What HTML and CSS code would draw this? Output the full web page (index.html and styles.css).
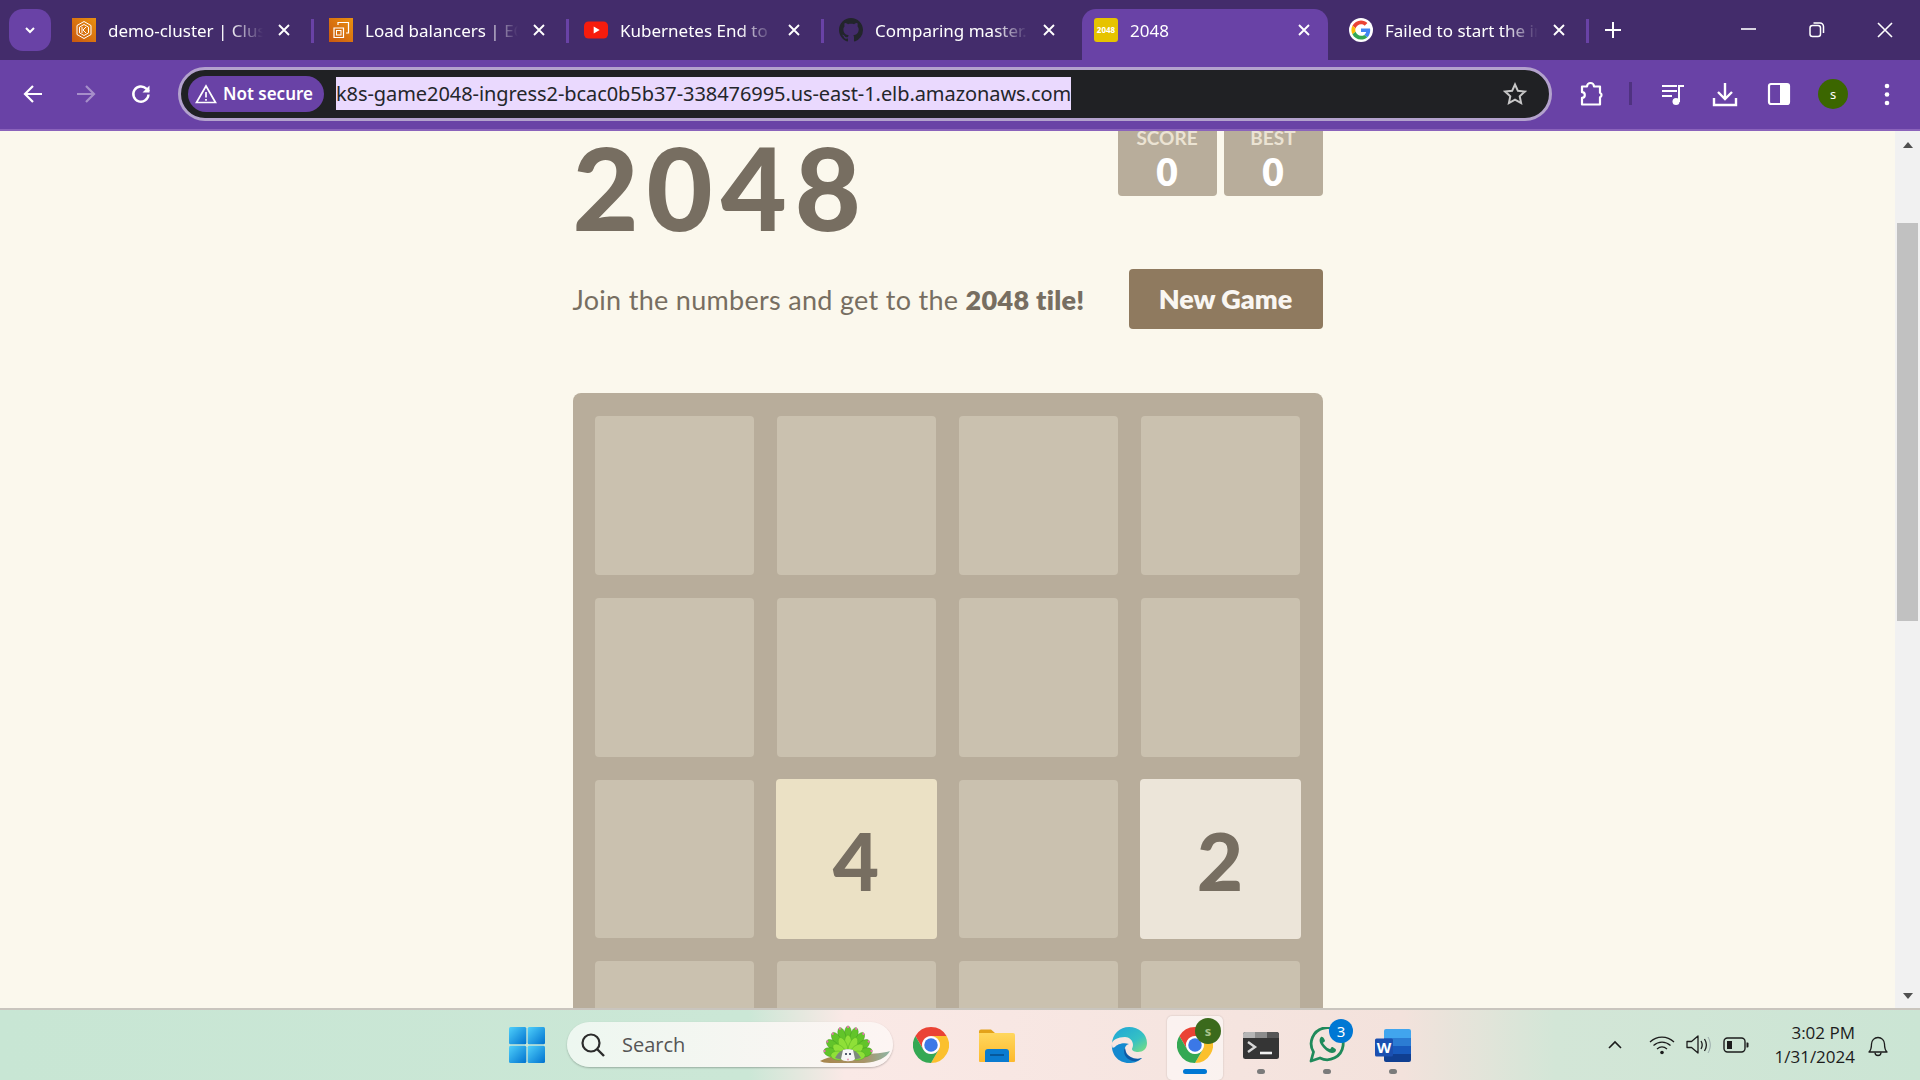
FILE: index.html
```html
<!DOCTYPE html>
<html lang="en">
  <head>
    <meta charset="utf-8">
    <title>2048</title>
    <link rel="stylesheet" href="styles.css">
  </head>
  <body>
    <svg class="defs" width="0" height="0">
      <symbol id="chrome" viewBox="0 0 48 48">
        <path fill="#ea4335" d="M24 0a24 24 0 0 1 20.8 12H24a12 12 0 0 0-10.4 18L3.2 12A24 24 0 0 1 24 0z"/>
        <path fill="#fbc02d" d="M44.8 12A24 24 0 0 1 24 48l10.4-18A12 12 0 0 0 24 12z"/>
        <path fill="#34a853" d="M3.2 12l10.4 18a12 12 0 0 0 20.8 0L24 48A24 24 0 0 1 3.2 12z"/>
        <circle cx="24" cy="24" r="11.5" fill="#fff"/>
        <circle cx="24" cy="24" r="9" fill="#3b78e7"/>
      </symbol>
      <symbol id="close" viewBox="0 0 14 14">
        <path d="M2 2l10 10M12 2L2 12" stroke="#fff" stroke-width="1.9" fill="none"/>
      </symbol>
      <linearGradient id="aws" x1="0" y1="1" x2="1" y2="0">
        <stop offset="0" stop-color="#c9580f"/>
        <stop offset="1" stop-color="#ea9010"/>
      </linearGradient>
      <linearGradient id="win" x1="0" y1="0" x2="1" y2="1">
        <stop offset="0" stop-color="#4fd0fb"/>
        <stop offset="1" stop-color="#0072cf"/>
      </linearGradient>
      <linearGradient id="edge" x1="0" y1="0" x2="1" y2="1">
        <stop offset="0" stop-color="#1fa4d8"/>
        <stop offset=".6" stop-color="#35c1c4"/>
        <stop offset="1" stop-color="#7fe07a"/>
      </linearGradient>
      <linearGradient id="folder" x1="0" y1="0" x2="0" y2="1">
        <stop offset="0" stop-color="#ffd75e"/>
        <stop offset="1" stop-color="#fdb92c"/>
      </linearGradient>
      <linearGradient id="ground" x1="0" y1="0" x2="1" y2="0">
        <stop offset="0" stop-color="#a8854c"/>
        <stop offset=".65" stop-color="#a8956a"/>
        <stop offset="1" stop-color="#8fb5a5"/>
      </linearGradient>
    </svg>

    <header class="tabstrip">
      <div class="tab-search">
        <svg width="14" height="14" viewBox="0 0 14 14"><path d="M3 5l4 4 4-4" stroke="#fff" stroke-width="2" fill="none"/></svg>
      </div>

      <div class="tab tab-first">
        <svg class="favicon" viewBox="0 0 24 24">
          <rect width="24" height="24" fill="url(#aws)"/>
          <path d="M12 3.5l7 4v9l-7 4-7-4v-9z M12 6.5l4.5 2.6v5.8L12 17.5l-4.5-2.6V9.1z" fill="none" stroke="#fff" stroke-width="1"/>
          <path d="M10 9v6M14 9l-3 3 3 3" fill="none" stroke="#fff" stroke-width="1"/>
        </svg>
        <span class="tab-title">demo-cluster | Cluster</span>
        <svg class="tab-close"><use href="#close"/></svg>
      </div>
      <div class="tab">
        <svg class="favicon" viewBox="0 0 24 24">
          <rect width="24" height="24" fill="url(#aws)"/>
          <path d="M9 7V4.500h10.500V15H17M5 10h9.500v9.500H5z" fill="none" stroke="#fff" stroke-width="1.200"/>
          <rect x="7.500" y="12.500" width="4.500" height="4.500" fill="none" stroke="#fff"/>
        </svg>
        <span class="tab-title">Load balancers | EC2</span>
        <svg class="tab-close"><use href="#close"/></svg>
      </div>
      <div class="tab">
        <svg class="favicon" viewBox="0 0 24 24">
          <rect x="0" y="3.500" width="24" height="17" rx="4.500" fill="#f61c0d"/>
          <path d="M9.700 8.500l6 3.500-6 3.500z" fill="#fff"/>
        </svg>
        <span class="tab-title">Kubernetes End to End</span>
        <svg class="tab-close"><use href="#close"/></svg>
      </div>
      <div class="tab tab-before-active">
        <svg class="favicon" viewBox="0 0 16 16">
          <path fill="#22252b" d="M8 0C3.58 0 0 3.58 0 8c0 3.54 2.29 6.53 5.47 7.59.4.07.55-.17.55-.38 0-.19-.01-.82-.01-1.49-2.01.37-2.53-.49-2.69-.94-.09-.23-.48-.94-.82-1.13-.28-.15-.68-.52-.01-.53.63-.01 1.08.58 1.23.82.72 1.21 1.87.87 2.33.66.07-.52.28-.87.51-1.07-1.78-.2-3.64-.89-3.64-3.95 0-.87.31-1.59.82-2.15-.08-.2-.36-1.02.08-2.12 0 0 .67-.21 2.2.82.64-.18 1.32-.27 2-.27.68 0 1.36.09 2 .27 1.53-1.04 2.2-.82 2.2-.82.44 1.1.16 1.92.08 2.12.51.56.82 1.27.82 2.15 0 3.07-1.87 3.75-3.65 3.95.29.25.54.73.54 1.48 0 1.07-.01 1.93-.01 2.2 0 .21.15.46.55.38A8.013 8.013 0 0016 8c0-4.420-3.580-8-8-8z"/>
        </svg>
        <span class="tab-title">Comparing master...</span>
        <svg class="tab-close"><use href="#close"/></svg>
      </div>
      <div class="tab tab-active">
        <div class="favicon favicon-2048">2048</div>
        <span class="tab-title">2048</span>
        <svg class="tab-close"><use href="#close"/></svg>
      </div>
      <div class="tab">
        <svg class="favicon" viewBox="-6 -6 60 60">
          <circle cx="24" cy="24" r="30" fill="#fff"/>
          <path fill="#ea4335" d="M24 9.500c3.540 0 6.710 1.220 9.210 3.600l6.850-6.850C35.900 2.380 30.470 0 24 0 14.620 0 6.510 5.380 2.560 13.220l7.980 6.190C12.430 13.720 17.740 9.500 24 9.500z"/>
          <path fill="#4285f4" d="M46.980 24.550c0-1.570-.15-3.090-.38-4.550H24v9.020h12.940c-.58 2.960-2.260 5.480-4.780 7.180l7.730 6c4.510-4.180 7.090-10.360 7.090-17.650z"/>
          <path fill="#fbbc05" d="M10.530 28.590c-.48-1.450-.76-2.990-.76-4.590s.27-3.140.76-4.590l-7.980-6.190C.92 16.460 0 20.120 0 24c0 3.880.92 7.540 2.560 10.780l7.970-6.190z"/>
          <path fill="#34a853" d="M24 48c6.480 0 11.930-2.130 15.890-5.810l-7.730-6c-2.150 1.450-4.920 2.300-8.160 2.300-6.260 0-11.570-4.220-13.470-9.910l-7.980 6.190C6.510 42.620 14.620 48 24 48z"/>
        </svg>
        <span class="tab-title">Failed to start the instance</span>
        <svg class="tab-close"><use href="#close"/></svg>
      </div>

      <div class="new-tab">
        <svg width="18" height="18" viewBox="0 0 18 18"><path d="M9 1v16M1 9h16" stroke="#fff" stroke-width="2"/></svg>
      </div>

      <div class="window-btns">
        <svg width="16" height="16" viewBox="0 0 16 16"><path d="M0 7h15" stroke="#fff" stroke-width="1.600"/></svg>
        <svg width="16" height="16" viewBox="0 0 16 16"><rect x="1" y="3.500" width="10.500" height="11" rx="2.500" fill="none" stroke="#fff" stroke-width="1.500"/><path d="M4.500 1h6.500a3.500 3.500 0 0 1 3.500 3.500V11" fill="none" stroke="#fff" stroke-width="1.500"/></svg>
        <svg width="16" height="16" viewBox="0 0 16 16"><path d="M1 1l14 14M15 1L1 15" stroke="#fff" stroke-width="1.600"/></svg>
      </div>
    </header>

    <nav class="toolbar">
      <div class="nav-btns">
        <svg width="22" height="22" viewBox="0 0 22 22"><path d="M20 11H3M11 3l-8 8 8 8" fill="none" stroke="#fff" stroke-width="2.200"/></svg>
        <svg width="22" height="22" viewBox="0 0 22 22"><path d="M2 11h17M11 3l8 8-8 8" fill="none" stroke="#a68fca" stroke-width="2.200"/></svg>
        <svg class="btn-reload" width="22" height="22" viewBox="0 0 22 22"><path d="M18.500 11.500a7.600 7.600 0 1 1-2.200-5.800L19 8.300" fill="none" stroke="#fff" stroke-width="2.400"/><path d="M19.500 2.500v7h-7z" fill="#fff"/></svg>
      </div>

      <div class="omnibox">
        <div class="security-chip">
          <svg width="22" height="20" viewBox="0 0 22 20"><path d="M11 2l9.500 16.500h-19z" fill="none" stroke="#fff" stroke-width="1.700"/><path d="M11 8v5.500M11 15v1.800" stroke="#fff" stroke-width="1.700"/></svg>
          <span>Not secure</span>
        </div>
        <span class="url">k8s-game2048-ingress2-bcac0b5b37-338476995.us-east-1.elb.amazonaws.com</span>
        <svg class="star" width="24" height="24" viewBox="0 0 24 24"><path d="M12 2.500l2.900 6.300 6.900.8-5.100 4.700 1.400 6.800-6.100-3.400-6.100 3.400 1.400-6.800-5.100-4.700 6.900-.8z" fill="none" stroke="#c7c7c7" stroke-width="2"/></svg>
      </div>

      <div class="toolbar-btns">
        <svg class="btn-ext" width="26" height="26" viewBox="0 0 26 26"><path d="M9 5.500a3.500 3.500 0 0 1 7 0h6v6.200a2.500 2.500 0 0 1 0 4.600v7.200H4v-6.700a2.800 2.800 0 0 0 0-5.600V5.500z" fill="none" stroke="#fff" stroke-width="2.200" stroke-linejoin="round"/></svg>
        <span class="toolbar-sep"></span>
        <svg class="btn-media" width="24" height="24" viewBox="0 0 24 24"><path d="M1 4h15M1 9h15M1 14h10" stroke="#fff" stroke-width="2"/><path d="M18 20V4h5" fill="none" stroke="#fff" stroke-width="2"/><circle cx="15" cy="19.500" r="3.500" fill="#fff"/></svg>
        <svg class="btn-download" width="26" height="26" viewBox="0 0 26 26"><path d="M13 2v15M6 11l7 7 7-7" fill="none" stroke="#fff" stroke-width="2.400"/><path d="M2 17v7h22v-7" fill="none" stroke="#fff" stroke-width="2.400"/></svg>
        <svg class="btn-side" width="24" height="24" viewBox="0 0 24 24"><rect x="2" y="2" width="20" height="20" rx="2" fill="none" stroke="#fff" stroke-width="2.200"/><rect x="13" y="2" width="9" height="20" fill="#fff"/></svg>
        <div class="avatar">s</div>
        <svg class="btn-menu" width="8" height="24" viewBox="0 0 8 24"><circle cx="4" cy="4" r="2.300" fill="#fff"/><circle cx="4" cy="12.500" r="2.300" fill="#fff"/><circle cx="4" cy="21" r="2.300" fill="#fff"/></svg>
      </div>
    </nav>

    <div class="viewport">
      <main class="page">
        <div class="game">
          <div class="heading">
            <h1 class="title">2048</h1>
            <div class="scores">
              <div class="score-box">
                <span class="score-label">SCORE</span>
                <span class="score-value">0</span>
              </div>
              <div class="score-box">
                <span class="score-label">BEST</span>
                <span class="score-value">0</span>
              </div>
            </div>
          </div>

          <div class="intro">
            <p class="intro-text">Join the numbers and get to the <strong>2048 tile!</strong></p>
            <a class="new-game">New Game</a>
          </div>

          <div class="board">
            <div class="cell"></div>
            <div class="cell"></div>
            <div class="cell"></div>
            <div class="cell"></div>
            <div class="cell"></div>
            <div class="cell"></div>
            <div class="cell"></div>
            <div class="cell"></div>
            <div class="cell"></div>
            <div class="cell tile tile-4">4</div>
            <div class="cell"></div>
            <div class="cell tile tile-2">2</div>
            <div class="cell"></div>
            <div class="cell"></div>
            <div class="cell"></div>
            <div class="cell"></div>
          </div>
        </div>
      </main>

      <aside class="scrollbar">
        <svg class="scroll-arrow" width="12" height="8" viewBox="0 0 12 8"><path d="M6 1l5 6H1z" fill="#505050"/></svg>
        <div class="scroll-thumb"></div>
        <svg class="scroll-arrow scroll-arrow-down" width="12" height="8" viewBox="0 0 12 8"><path d="M6 7L1 1h10z" fill="#505050"/></svg>
      </aside>
    </div>

    <footer class="taskbar">
      <div class="slot">
        <svg width="36" height="36" viewBox="0 0 36 36">
          <rect width="17.300" height="17.300" rx="1.500" fill="url(#win)"/>
          <rect x="18.700" width="17.300" height="17.300" rx="1.500" fill="url(#win)"/>
          <rect y="18.700" width="17.300" height="17.300" rx="1.500" fill="url(#win)"/>
          <rect x="18.700" y="18.700" width="17.300" height="17.300" rx="1.500" fill="url(#win)"/>
        </svg>
      </div>

      <div class="search">
        <svg width="26" height="26" viewBox="0 0 26 26"><circle cx="11" cy="11" r="8.500" fill="none" stroke="#2b2b2b" stroke-width="2.200"/><path d="M17 17l7 7" stroke="#2b2b2b" stroke-width="2.400"/></svg>
        <span class="search-text">Search</span>
        <svg class="search-art" width="74" height="40" viewBox="0 0 74 40">
          <path d="M2 36c10-5 22-7 42-7 12 0 22-1 28-3-4 7-12 11-26 12H12C7 38 4 37 2 36z" fill="url(#ground)"/>
          <g transform="translate(30 31) scale(.82 1)">
            <g fill="#62c42a" stroke="#3f9a1c" stroke-width=".5">
              <ellipse cy="-21" rx="4.500" ry="9"/>
              <ellipse cy="-21" rx="4.500" ry="9" transform="rotate(-20)"/>
              <ellipse cy="-21" rx="4.500" ry="9" transform="rotate(20)"/>
              <ellipse cy="-21" rx="4.500" ry="9" transform="rotate(-40)"/>
              <ellipse cy="-21" rx="4.500" ry="9" transform="rotate(40)"/>
              <ellipse cy="-21" rx="4.500" ry="9" transform="rotate(-60)"/>
              <ellipse cy="-21" rx="4.500" ry="9" transform="rotate(60)"/>
              <ellipse cy="-21" rx="4.500" ry="9" transform="rotate(-80)"/>
              <ellipse cy="-21" rx="4.500" ry="9" transform="rotate(80)"/>
            </g>
            <g fill="#8fe038" stroke="#4fae20" stroke-width=".5">
              <ellipse cy="-12" rx="4.500" ry="9"/>
              <ellipse cy="-12" rx="4.500" ry="9" transform="rotate(-30)"/>
              <ellipse cy="-12" rx="4.500" ry="9" transform="rotate(30)"/>
              <ellipse cy="-12" rx="4.500" ry="9" transform="rotate(-60)"/>
              <ellipse cy="-12" rx="4.500" ry="9" transform="rotate(60)"/>
              <ellipse cy="-12" rx="4.500" ry="9" transform="rotate(-88)"/>
              <ellipse cy="-12" rx="4.500" ry="9" transform="rotate(88)"/>
            </g>
            <g fill="#ea6fb4">
              <circle cy="-29" r="1.200"/>
              <circle cy="-29" r="1.200" transform="rotate(-20)"/>
              <circle cy="-29" r="1.200" transform="rotate(20)"/>
              <circle cy="-29" r="1.200" transform="rotate(-40)"/>
              <circle cy="-29" r="1.200" transform="rotate(40)"/>
              <circle cy="-29" r="1.200" transform="rotate(-60)"/>
              <circle cy="-29" r="1.200" transform="rotate(60)"/>
              <circle cy="-29" r="1.200" transform="rotate(-80)"/>
              <circle cy="-29" r="1.200" transform="rotate(80)"/>
            </g>
          </g>
          <path d="M17 33c3-6 8-9 13-9s10 3 13 9c-6 2-20 2-26 0z" fill="#7d8a7c"/>
          <path d="M25 25c2-1 8-1 10 0l2 9c-2 3-12 3-14 0z" fill="#f6f6f6"/>
          <circle cx="28" cy="29" r="1" fill="#1e2a44"/>
          <circle cx="32" cy="29" r="1" fill="#1e2a44"/>
          <circle cx="30" cy="34.500" r="1.100" fill="#e9a0b8"/>
        </svg>
      </div>

      <div class="slots">
        <div class="slot"><svg width="36" height="36"><use href="#chrome"/></svg></div>
        <div class="slot">
          <svg width="36" height="33" viewBox="0 0 36 33">
            <path d="M0 2.500A2 2 0 0 1 2 .5h10l4 3.500H0z" fill="#e3a21a"/>
            <path d="M0 4h34a2 2 0 0 1 2 2v26a1 1 0 0 1-1 1H1a1 1 0 0 1-1-1z" fill="url(#folder)"/>
            <path d="M6 33V23a3 3 0 0 1 3-3h18a3 3 0 0 1 3 3v10z" fill="#0a7bd0"/>
            <path d="M11 26h14" stroke="#064d8a" stroke-width="1.500"/>
          </svg>
        </div>
        <div class="slot"></div>
        <div class="slot">
          <svg width="36" height="36" viewBox="0 0 36 36">
            <path d="M1 17C1 7 9 0 18 0c10 0 18 7 18 16 0 6-4 9-9 9-3 0-6-1-6-3 0-1 1-2 1-4 0-5-4-8-8-8-7 0-13 3-13 7z" fill="url(#edge)"/>
            <path d="M1 17c-1 10 6 19 17 19 5 0 9-1 13-5-8 3-15 0-17-5-1-4 0-8 4-9-5-2-12 0-14 3-2 1-3 2-3-3z" fill="#1489cf"/>
            <path d="M13 24c0 7 7 11 13 10 2-1 4-2 5-3-7 2-14-1-16-6l-1-4c-1 1-1 2-1 3z" fill="#0c5aa6"/>
          </svg>
        </div>
        <div class="slot slot-active">
          <svg width="36" height="36"><use href="#chrome"/></svg>
          <span class="profile-badge">s</span>
          <span class="running running-active"></span>
        </div>
        <div class="slot">
          <svg width="36" height="27" viewBox="0 0 36 27">
            <rect width="36" height="27" rx="2.500" fill="#353535"/>
            <path d="M0 6V2.500A2.500 2.500 0 0 1 2.500 0H12v6z" fill="#b5b5b5"/>
            <rect x="12" width="12" height="6" fill="#8c8c8c"/>
            <path d="M24 0h9.500A2.500 2.500 0 0 1 36 2.500V6H24z" fill="#565656"/>
            <path d="M5 10l7 5-7 5" fill="none" stroke="#d8d8d8" stroke-width="2.400"/>
            <path d="M17 21h12" stroke="#f2f2f2" stroke-width="2.600"/>
          </svg>
          <span class="running"></span>
        </div>
        <div class="slot">
          <svg width="36" height="36" viewBox="0 0 36 36">
            <path d="M2 34l2.500-9A16 16 0 1 1 11 31z" fill="none" stroke="#1f8a5b" stroke-width="2.800" stroke-linejoin="round"/>
            <path d="M12 10c-2 2-2 5 1 9s7 7 10 7c2 0 4-1 4-3 0-1-3-3-4-3s-1 2-2 2c-2 0-6-4-7-6 0-1 2-1 2-2s-2-5-4-4z" fill="#1f8a5b"/>
          </svg>
          <span class="count-badge">3</span>
          <span class="running"></span>
        </div>
        <div class="slot">
          <svg width="36" height="33" viewBox="0 0 36 33">
            <path d="M9 2a2 2 0 0 1 2-2h23a2 2 0 0 1 2 2v7H9z" fill="#41a5ee"/>
            <rect x="9" y="9" width="27" height="8" fill="#2b7cd3"/>
            <rect x="9" y="17" width="27" height="8" fill="#185abd"/>
            <path d="M9 25h27v6a2 2 0 0 1-2 2H11a2 2 0 0 1-2-2z" fill="#103f91"/>
            <rect y="9.500" width="18" height="18" rx="1.500" fill="#1a4fb0"/>
            <text x="9" y="24" class="word-w">W</text>
          </svg>
          <span class="running"></span>
        </div>
      </div>

      <div class="tray">
        <svg class="tray-chevron" width="16" height="10" viewBox="0 0 16 10"><path d="M2 8l6-6 6 6" fill="none" stroke="#1c1c1c" stroke-width="1.600"/></svg>
        <svg class="tray-wifi" width="26" height="20" viewBox="0 0 26 20"><path d="M1 7c7-6.500 17-6.500 24 0M4.500 10.500c5-4.500 12-4.500 17 0M8 14c3-2.500 7-2.500 10 0" fill="none" stroke="#1c1c1c" stroke-width="1.300"/><circle cx="13" cy="17.500" r="1.800" fill="#1c1c1c"/></svg>
        <svg class="tray-volume" width="26" height="22" viewBox="0 0 26 22"><path d="M1 7.500h4.500L12 2v17l-6.500-5.500H1z" fill="none" stroke="#1c1c1c" stroke-width="1.300" stroke-linejoin="round"/><path d="M15 7c1.500 2.500 1.500 5.500 0 8M18.500 5c2.200 3.500 2.200 8.500 0 12" fill="none" stroke="#1c1c1c" stroke-width="1.300"/><path d="M22 3c3 5 3 11 0 16" fill="none" stroke="#9aa" stroke-width="1"/></svg>
        <svg class="tray-battery" width="26" height="16" viewBox="0 0 26 16"><rect x="1" y="1" width="21" height="14" rx="3.500" fill="none" stroke="#1c1c1c" stroke-width="1.400"/><rect x="4" y="4" width="5" height="8" fill="#1c1c1c"/><path d="M23.500 5.500h1a1 1 0 0 1 1 1v3a1 1 0 0 1-1 1h-1z" fill="#1c1c1c"/></svg>
        <div class="clock">
          <span>3:02 PM</span>
          <span>1/31/2024</span>
        </div>
        <svg class="tray-bell" width="20" height="23" viewBox="0 0 20 23"><path d="M1 18c2-2 2.500-4 2.500-8a6.500 6.500 0 0 1 13 0c0 4 .5 6 2.500 8z" fill="none" stroke="#1c1c1c" stroke-width="1.300" stroke-linejoin="round"/><path d="M7 18.500a3 3 0 0 0 6 0" fill="none" stroke="#1c1c1c" stroke-width="1.300"/></svg>
      </div>
    </footer>
  </body>
</html>
```

FILE: styles.css
```css
* {
  box-sizing: border-box;
}

html,
body {
  margin: 0;
  padding: 0;
  height: 100%;
  overflow: hidden;
}

body {
  width: 1920px;
  height: 1080px;
  display: flex;
  flex-direction: column;
  font-family: "Noto Sans", "Open Sans", sans-serif;
}

.defs {
  position: absolute;
}

/* browser tabs */
.tabstrip {
  height: 60px;
  flex: none;
  display: flex;
  align-items: flex-end;
  background-color: #432c6b;
}

.tab-search {
  width: 42px;
  height: 42px;
  margin: 0 6px 9px 9px;
  border-radius: 14px;
  background-color: #6942a6;
  display: flex;
  justify-content: center;
  align-items: center;
}

.tab {
  width: 255px;
  height: 51px;
  flex: none;
  display: flex;
  align-items: center;
  padding: 0 21px 9px 17px;
  position: relative;
  color: #fff;
  font-size: 17px;
}

.tab-first {
  padding-left: 15px;
}

.tab::after {
  content: "";
  position: absolute;
  right: -2px;
  top: 10px;
  width: 3px;
  height: 24px;
  background-color: #6942a6;
}

.tab-active {
  width: 246px;
  margin: 0 4px 0 5px;
  padding: 0 17px 9px 12px;
  background-color: #6942a6;
  border-radius: 14px 14px 0 0;
}

.tab-active::after,
.tab-before-active::after {
  display: none;
}

.favicon {
  width: 24px;
  height: 24px;
  flex: none;
  margin-right: 12px;
}

.favicon-2048 {
  height: 24px;
  border-radius: 3px;
  background-color: #e6c300;
  color: #fff;
  font-size: 8px;
  font-weight: 700;
  line-height: 24px;
  text-align: center;
}

.tab-title {
  flex: 1;
  min-width: 0;
  white-space: nowrap;
  overflow: hidden;
  -webkit-mask-image: linear-gradient(to right, #000 78%, transparent 100%);
  mask-image: linear-gradient(to right, #000 78%, transparent 100%);
}

.tab-close {
  width: 14px;
  height: 14px;
  flex: none;
  margin-left: 14px;
}

.new-tab {
  width: 18px;
  height: 18px;
  margin: 0 0 21px 17px;
}

.window-btns {
  margin-left: auto;
  margin-bottom: 22px;
  display: flex;
  gap: 52px;
  padding-right: 27px;
}

/* address bar row */
.toolbar {
  height: 71px;
  flex: none;
  display: flex;
  align-items: center;
  background-color: #6942a6;
  border-bottom: 2px solid #8a63bb;
  padding-bottom: 2px;
}

.nav-btns {
  width: 178px;
  flex: none;
  display: flex;
  gap: 31px;
  padding-left: 22px;
}

.btn-reload {
  margin-left: 2px;
}

.omnibox {
  width: 1374px;
  height: 54px;
  flex: none;
  display: flex;
  align-items: center;
  border: 3px solid #b3a2cd;
  border-radius: 27px;
  background-color: #202124;
  padding: 0 22px 0 7px;
}

.security-chip {
  width: 136px;
  height: 36px;
  flex: none;
  display: flex;
  align-items: center;
  gap: 6px;
  padding-left: 7px;
  border-radius: 18px;
  background-color: #6942a6;
  color: #fff;
  font-size: 17px;
  font-weight: 600;
  white-space: nowrap;
}

.url {
  margin-left: 12px;
  padding: 0;
  height: 33px;
  line-height: 33px;
  background-color: #ead9fe;
  color: #24262b;
  font-size: 20px;
  letter-spacing: -0.07px;
  white-space: nowrap;
}

.star {
  margin-left: auto;
}

.toolbar-btns {
  flex: 1;
  display: flex;
  align-items: center;
  padding-left: 26px;
}

.toolbar-sep {
  width: 3px;
  height: 23px;
  margin: 0 29px 0 25px;
  background-color: #4f3280;
}

.btn-download {
  margin-left: 27px;
}

.btn-side {
  margin-left: 29px;
}

.avatar {
  width: 30px;
  height: 30px;
  margin-left: 27px;
  border-radius: 50%;
  background-color: #3b6600;
  color: #fff;
  font-size: 13px;
  line-height: 30px;
  text-align: center;
}

.btn-menu {
  margin-left: 35px;
}

/* web page */
.viewport {
  flex: 1;
  min-height: 0;
  display: flex;
}

.page {
  flex: 1;
  overflow: hidden;
  background-color: #fbf8ed;
  font-family: Lato, "Noto Sans", sans-serif;
  color: #776e61;
}

.game {
  width: 750px;
  margin: -25px auto 0;
}

.heading {
  height: 138px;
  display: flex;
  justify-content: space-between;
  align-items: flex-start;
}

.title {
  margin: 0;
  padding-top: 23px;
  font-size: 114px;
  font-weight: 900;
  line-height: 116px;
  letter-spacing: 8px;
}

.scores {
  display: flex;
  gap: 7px;
}

.score-box {
  width: 99px;
  height: 90px;
  display: flex;
  flex-direction: column;
  align-items: center;
  padding-top: 19px;
  border-radius: 4px;
  background-color: #b8ad9b;
  color: #fff;
}

.score-label {
  font-size: 19px;
  font-weight: 700;
  line-height: 26px;
  color: #ebe3d3;
}

.score-value {
  font-size: 37px;
  font-weight: 800;
  line-height: 42px;
}

.intro {
  height: 60px;
  margin-top: 25px;
  display: flex;
  justify-content: space-between;
  align-items: center;
}

.intro-text {
  margin: 0;
  font-size: 27px;
  letter-spacing: 0.3px;
}

.intro-text strong {
  font-weight: 800;
}

.new-game {
  width: 194px;
  height: 60px;
  border-radius: 4px;
  background-color: #8f7a5f;
  color: #f9f6f2;
  font-size: 27px;
  font-weight: 800;
  line-height: 60px;
  text-align: center;
}

.board {
  width: 750px;
  height: 750px;
  margin-top: 64px;
  display: grid;
  grid-template-columns: repeat(4, 1fr);
  grid-template-rows: repeat(4, 1fr);
  gap: 23px;
  padding: 23px 23px 23px 22px;
  border-radius: 8px;
  background-color: #b8ad9b;
}

.cell {
  border-radius: 4px;
  background-color: #cac1af;
}

.tile {
  margin: -1px;
  padding-top: 2px;
  display: flex;
  justify-content: center;
  align-items: center;
  font-size: 80px;
  font-weight: 900;
}

.tile-4 {
  background-color: #ebe1c5;
}

.tile-2 {
  background-color: #ece5d9;
}

.scrollbar {
  width: 25px;
  flex: none;
  display: flex;
  flex-direction: column;
  align-items: center;
  background-color: #f1f1f1;
  padding-top: 10px;
}

.scroll-thumb {
  width: 21px;
  height: 398px;
  margin-top: 74px;
  background-color: #c1c1c1;
}

.scroll-arrow-down {
  margin-top: auto;
  margin-bottom: 8px;
}

/* windows taskbar */
.taskbar {
  height: 72px;
  flex: none;
  display: flex;
  padding-left: 494px;
  border-top: 2px solid #c9c5be;
  background: linear-gradient(to right, #c8e6d4 0%, #cbe7d6 39%, #fae9e6 44%, #f3e2dc 73%, #d3e6d7 81%, #cbe5d4 100%);
}

.slots {
  display: flex;
  margin-left: 5px;
}

.slot {
  width: 66px;
  height: 70px;
  position: relative;
  display: flex;
  justify-content: center;
  align-items: center;
  flex: none;
}

.slot-active::before {
  content: "";
  position: absolute;
  left: 5px;
  right: 5px;
  top: 6px;
  bottom: 0;
  border-radius: 5px;
  background-color: rgba(255, 255, 255, 0.5);
  box-shadow: 0 0 2px rgba(0, 0, 0, 0.2);
}

.slot svg {
  position: relative;
}

.profile-badge {
  position: absolute;
  left: 33px;
  top: 8px;
  width: 26px;
  height: 26px;
  border-radius: 50%;
  background-color: #3b6a1c;
  color: #a9c48c;
  font-size: 13px;
  font-weight: 700;
  line-height: 26px;
  text-align: center;
}

.count-badge {
  position: absolute;
  left: 35px;
  top: 9px;
  width: 24px;
  height: 24px;
  border-radius: 50%;
  background-color: #0078d4;
  color: #fff;
  font-size: 15px;
  line-height: 24px;
  text-align: center;
}

.running {
  position: absolute;
  left: 29px;
  bottom: 6px;
  width: 8px;
  height: 5px;
  border-radius: 3px;
  background-color: #7b7b7b;
}

.running-active {
  left: 21px;
  width: 24px;
  background-color: #0078d4;
}

.word-w {
  font-size: 15px;
  font-weight: 700;
  fill: #fff;
  text-anchor: middle;
}

.search {
  width: 326px;
  height: 45px;
  margin: 12px 0 0 7px;
  display: flex;
  align-items: center;
  padding: 0 1px 0 13px;
  border-radius: 23px;
  background: linear-gradient(to right, #edf7f0, #fdf5f3);
  box-shadow: 0 1px 2px rgba(0, 0, 0, 0.25);
  color: #555;
  font-family: "Open Sans", sans-serif;
  font-size: 20px;
}

.search-text {
  margin-left: 16px;
}

.search-art {
  margin-left: auto;
  margin-top: 1px;
}

.tray {
  display: flex;
  align-items: center;
  margin-left: 181px;
  color: #1c1c1c;
}

.tray-wifi {
  margin-left: 26px;
}

.tray-volume {
  margin-left: 11px;
}

.tray-battery {
  margin-left: 11px;
}

.clock {
  width: 100px;
  margin-left: 6px;
  display: flex;
  flex-direction: column;
  align-items: flex-end;
  font-family: "Open Sans", sans-serif;
  font-size: 17px;
  line-height: 24px;
}

.tray-bell {
  margin-left: 13px;
}
```
